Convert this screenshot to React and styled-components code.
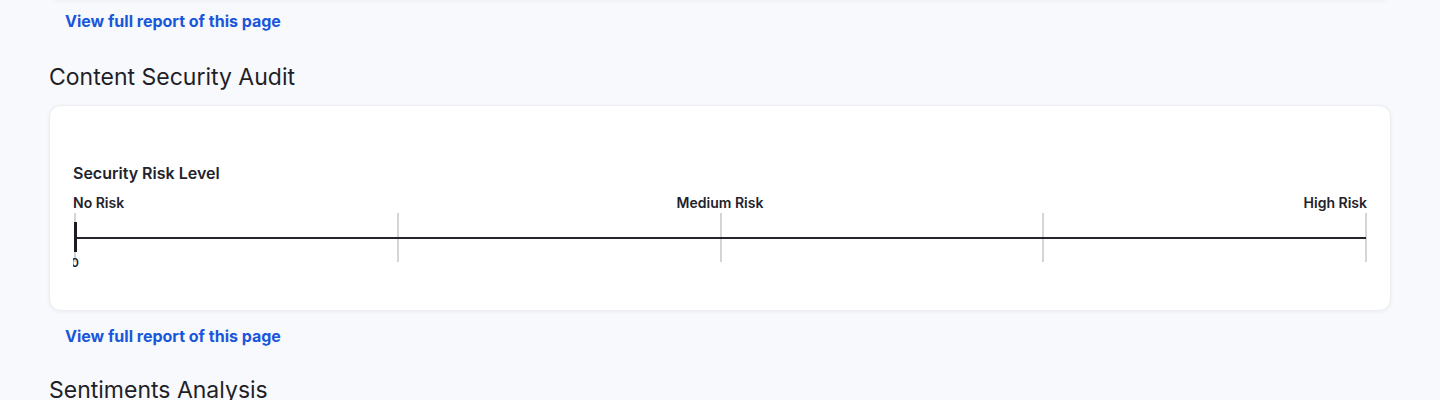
import React from "react"
import styled, { createGlobalStyle } from "styled-components"

const GlobalStyle = createGlobalStyle`
  body {
    margin: 0;
    background: #f8f9fc;
    font-family: Inter, "Noto Sans", sans-serif;
    color: #1f1f29;
  }
`

const Page = styled.div`
  padding: 0 49px;
  height: 400px;
  overflow: hidden;
`

const Card = styled.div`
  background: #ffffff;
  border: 1px solid #eceef3;
  border-radius: 12px;
  box-shadow: 0 1px 4px rgba(20, 30, 60, 0.06);
  box-sizing: border-box;
`

const PrevCard = styled(Card)`
  height: 40px;
  margin-top: -40px;
`

const ReportLink = styled.a`
  display: block;
  margin: ${(p) => p.$top}px 0 0 16px;
  font-size: 16px;
  line-height: 20px;
  font-weight: 700;
  color: #1a56db;
  text-decoration: none;
`

const SectionTitle = styled.h2`
  margin: ${(p) => p.$top}px 0 12px;
  font-size: 23px;
  line-height: 32px;
  font-weight: 400;
  color: #1f1f29;
`

const AuditCard = styled(Card)`
  height: 206px;
  padding: 57px 23px 0;
`

const ChartTitle = styled.div`
  font-size: 16px;
  line-height: 20px;
  font-weight: 600;
  color: #22222b;
`

const Labels = styled.div`
  display: grid;
  grid-template-columns: 1fr auto 1fr;
  margin-top: 12px;
  font-size: 14px;
  line-height: 16px;
  font-weight: 600;
  color: #22222b;
  span:last-child {
    justify-self: end;
  }
`

const Scale = styled.div`
  position: relative;
  margin-top: 2px;
  height: 58px;
  overflow: hidden;
`

const Ticks = styled.div`
  display: flex;
  justify-content: space-between;
  padding: 0 0 0 1px;
  height: 49px;
`

const Tick = styled.span`
  width: 2px;
  background: #d4d5da;
`

const Baseline = styled.div`
  position: absolute;
  left: 1px;
  right: 1px;
  top: 24px;
  height: 2px;
  background: #24242c;
`

const Marker = styled.div`
  position: absolute;
  left: 1px;
  top: 9px;
  width: 3px;
  height: 30px;
  background: #1c1c22;
`

const ValueLabel = styled.div`
  position: absolute;
  left: 2px;
  top: 43px;
  transform: translateX(-50%);
  font-size: 12px;
  line-height: 14px;
  font-weight: 600;
  color: #22222b;
`

const RiskScale = () => (
  <Scale>
    <Ticks>
      {[0, 1, 2, 3, 4].map((i) => (
        <Tick key={i} />
      ))}
    </Ticks>
    <Baseline />
    <Marker />
    <ValueLabel>0</ValueLabel>
  </Scale>
)

const App = () => (
  <>
    <GlobalStyle />
    <Page>
      <PrevCard />
      <ReportLink href="#" $top={11}>View full report of this page</ReportLink>
      <SectionTitle $top={30}>Content Security Audit</SectionTitle>
      <AuditCard>
        <ChartTitle>Security Risk Level</ChartTitle>
        <Labels>
          <span>No Risk</span>
          <span>Medium Risk</span>
          <span>High Risk</span>
        </Labels>
        <RiskScale />
      </AuditCard>
      <ReportLink href="#" $top={15}>View full report of this page</ReportLink>
      <SectionTitle $top={28}>Sentiments Analysis</SectionTitle>
    </Page>
  </>
)

export default App
